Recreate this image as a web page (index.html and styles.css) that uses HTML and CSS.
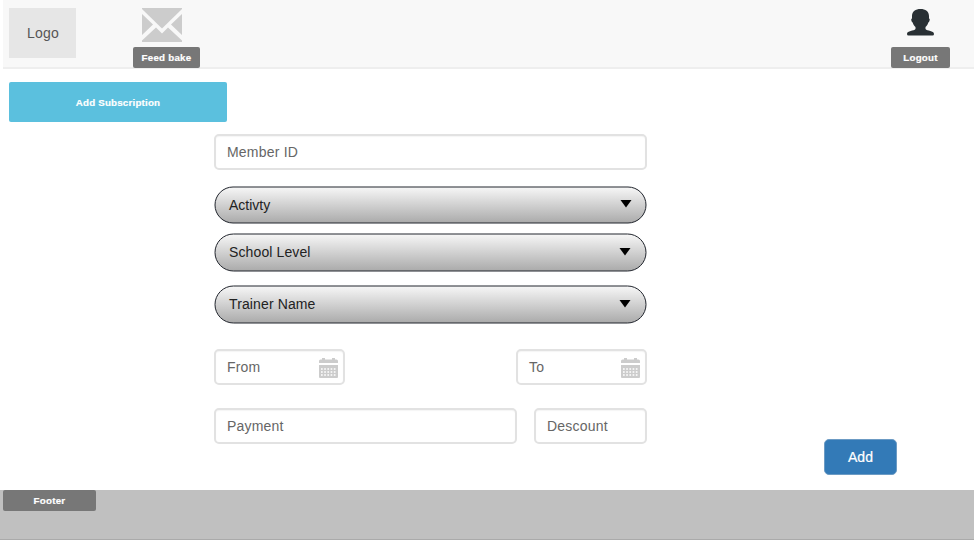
FILE: index.html
```html
<!DOCTYPE html>
<html lang="en">
<head>
<meta charset="utf-8">
<title>Add Subscription</title>
<link rel="stylesheet" href="styles.css">
</head>
<body>
<header class="header">
  <div class="logo">Logo</div>
  <div class="action feedback">
    <svg class="mail" width="40" height="34" viewBox="0 0 40 34" fill="#ccc"><path d="M0 0H40V1L20 20.500L0 1Z"/><path d="M0 6V27L11 16.500ZM40 6V27L29 16.500Z"/><path d="M0 34V32.500L14 19.500L20 25.500L26 19.500L40 32.500V34Z"/></svg>
    <span class="chip">Feed bake</span>
  </div>
  <div class="action logout">
    <svg class="user" width="27" height="27" viewBox="0 0 27 27" fill="#293034"><path d="M13.500 0C18.500 0 22 2.500 22 7V9.500C23.500 9.500 22.500 13 21.300 13.500C20.800 15.500 19.500 17 18.500 18V20C20 22 27 21.500 27 25Q27 26.500 25.500 26.500H1.500Q0 26.500 0 25C0 21.500 7 22 8.500 20V18C7.500 17 6.200 15.500 5.700 13.500C4.500 13 3.500 9.500 5 9.500V7C5 2.500 8.500 0 13.500 0Z"/></svg>
    <span class="chip">Logout</span>
  </div>
</header>
<main class="main">
  <button class="subscribe">Add Subscription</button>
  <form class="form">
    <div class="field">Member ID</div>
    <div class="select activity"><svg class="pill" width="433" height="38"><use href="#pill-38"/></svg><span>Activty</span><svg class="arrow" width="12" height="8"><path d="M.5 0H11.500L6 7.500Z"/></svg></div>
    <div class="select level"><svg class="pill" width="433" height="39"><use href="#pill-39"/></svg><span>School Level</span><svg class="arrow" width="12" height="8"><path d="M.5 0H11.500L6 7.500Z"/></svg></div>
    <div class="select trainer"><svg class="pill" width="433" height="39"><use href="#pill-39"/></svg><span>Trainer Name</span><svg class="arrow" width="12" height="8"><path d="M.5 0H11.500L6 7.500Z"/></svg></div>
    <div class="row dates">
      <div class="field date">From<svg width="19" height="20"><use href="#calendar"/></svg></div>
      <div class="field date">To<svg width="19" height="20"><use href="#calendar"/></svg></div>
    </div>
    <div class="row amounts">
      <div class="field payment">Payment</div>
      <div class="field discount">Descount</div>
    </div>
  </form>
  <button class="add">Add</button>
</main>
<footer class="footer"><span class="chip">Footer</span></footer>
<svg class="defs" width="0" height="0">
  <defs>
    <linearGradient id="metal" x1="0" y1="0" x2="0" y2="1"><stop offset="0" stop-color="#f7f7f7"/><stop offset="1" stop-color="#aaa"/></linearGradient>
    <rect id="pill-38" x="1" y="1" width="431" height="36" rx="18" fill="url(#metal)" stroke="#20242c"/>
    <rect id="pill-39" x="1" y="1" width="431" height="37" rx="18.500" fill="url(#metal)" stroke="#20242c"/>
    <g id="calendar" fill="#ccc">
      <path d="M0 5V3Q0 1.500 1.500 1.500H3V0H6V1.500H13V0H16V1.500H17.500Q19 1.500 19 3V5Z"/>
      <path d="M0 7H19V19Q19 20 18 20H1Q0 20 0 19Z"/>
      <path stroke="#fff" stroke-width="1.700" stroke-dasharray="1.700 1.500" d="M2 11H17M2 14H17M2 17H17"/>
    </g>
  </defs>
</svg>
</body>
</html>
```
FILE: styles.css
```css
* { box-sizing: border-box; }
body { margin: 0; height: 540px; overflow: hidden; background: #fff; font: 14px/20px "Liberation Sans", Arial, sans-serif; color: #666; display: flex; flex-direction: column; }
button { border: 0; padding: 0; font-family: inherit; color: #fff; }
svg { display: block; flex: none; }
.defs { position: absolute; }
.header { height: 69px; flex: none; margin-left: 3px; padding: 8px 24px 0 6px; background: #f8f8f8; border-bottom: 2px solid #eee; display: flex; align-items: flex-start; }
.logo { width: 67px; height: 50px; padding-left: 1px; background: #e6e6e6; color: #555; text-align: center; line-height: 50px; letter-spacing: .2px; }
.action { height: 60px; display: flex; flex-direction: column; justify-content: space-between; align-items: center; }
.feedback { width: 67px; margin-left: 57px; }
.mail { margin-left: -9px; }
.logout { width: 59px; margin-left: auto; padding-top: 1px; }
.chip { width: 100%; height: 21px; background: #777; color: #fff; border-radius: 2px; font-size: 9.75px; font-weight: bold; line-height: 21px; letter-spacing: .25px; text-align: center; -webkit-text-stroke: .2px #fff; }
.main { height: 421px; flex: none; padding: 13px 77px 0 9px; display: flex; flex-direction: column; align-items: flex-start; }
.subscribe { width: 218px; height: 40px; flex: none; background: #5bc0de; border-radius: 2px; font-size: 9.75px; font-weight: bold; letter-spacing: .2px; -webkit-text-stroke: .2px #fff; }
.form { width: 433px; margin: 12px 0 0 205px; }
.field { height: 36px; border: 2px solid #e2e2e2; border-radius: 5px; padding: 0 11px; line-height: 32px; letter-spacing: .2px; box-shadow: inset 0 1px 1px #f5f5f5; }
.select { position: relative; height: 39px; padding: 0 15px; display: flex; align-items: center; justify-content: space-between; color: #222; letter-spacing: .12px; }
.pill { position: absolute; left: 0; top: 0; }
.select span, .arrow { position: relative; }
.level span, .trainer span { top: -1px; }
.arrow { fill: #000; top: -1px; }
.activity { height: 38px; margin-top: 16px; padding-right: 15px; letter-spacing: 0; }
.level { margin-top: 9px; }
.trainer { margin-top: 13px; }
.level, .trainer { padding-right: 16px; }
.row { display: flex; justify-content: space-between; }
.dates { margin-top: 25px; }
.date { width: 131px; padding-right: 5px; display: flex; align-items: center; justify-content: space-between; }
.date svg { margin-top: 2px; }
.amounts { margin-top: 23px; }
.payment { width: 303px; }
.discount { width: 113px; }
.add { width: 73px; height: 36px; margin: -5px 0 0 auto; flex: none; background: #337ab7; border: 1px solid #6c9bc4; border-radius: 5px; font-size: 14px; -webkit-text-stroke: .2px #fff; }
.footer { height: 50px; flex: none; padding-left: 3px; background: #c0c0c0; border-bottom: 1px solid #aaa; display: flex; }
.footer .chip { width: 93px; }
```
